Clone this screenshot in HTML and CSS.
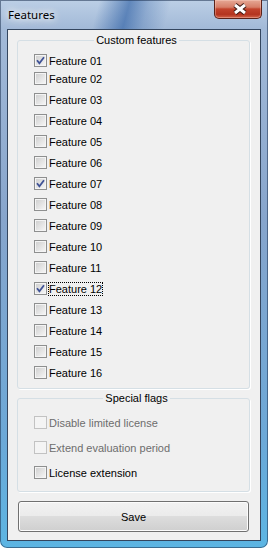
FILE: index.html
```html
<!DOCTYPE html>
<html lang="en">
<head>
<meta charset="UTF-8" />
<meta name="viewport" content="width=device-width, initial-scale=1" />
<title>Features</title>
<link rel="stylesheet" href="styles.css">
</head>
<body>

<div class="window">
  <div class="titlebar">
    <span class="title">Features</span>
    <button class="close" aria-label="Close">
      <svg width="46" height="18" viewBox="0 0 46 18">
        <path d="M20 5 L30 13 M30 5 L20 13" stroke="#3a1712" stroke-width="5" fill="none" />
        <path d="M20 5 L30 13 M30 5 L20 13" stroke="#fff" stroke-width="3" fill="none" />
      </svg>
    </button>
  </div>

  <div class="client">
    <fieldset class="group custom">
      <legend>Custom features</legend>
      <label class="row"><span class="box checked"><svg width="11" height="11" viewBox="0 0 11 11"><path d="M2 5.3 L4.4 8.3 L9 2.3" /></svg></span><span class="text">Feature 01</span></label>
      <label class="row"><span class="box"></span><span class="text">Feature 02</span></label>
      <label class="row"><span class="box"></span><span class="text">Feature 03</span></label>
      <label class="row"><span class="box"></span><span class="text">Feature 04</span></label>
      <label class="row"><span class="box"></span><span class="text">Feature 05</span></label>
      <label class="row"><span class="box"></span><span class="text">Feature 06</span></label>
      <label class="row"><span class="box checked"><svg width="11" height="11" viewBox="0 0 11 11"><path d="M2 5.3 L4.4 8.3 L9 2.3" /></svg></span><span class="text">Feature 07</span></label>
      <label class="row"><span class="box"></span><span class="text">Feature 08</span></label>
      <label class="row"><span class="box"></span><span class="text">Feature 09</span></label>
      <label class="row"><span class="box"></span><span class="text">Feature 10</span></label>
      <label class="row"><span class="box"></span><span class="text">Feature 11</span></label>
      <label class="row"><span class="box checked"><svg width="11" height="11" viewBox="0 0 11 11"><path d="M2 5.3 L4.4 8.3 L9 2.3" /></svg></span><span class="text focused">Feature 12</span></label>
      <label class="row"><span class="box"></span><span class="text">Feature 13</span></label>
      <label class="row"><span class="box"></span><span class="text">Feature 14</span></label>
      <label class="row"><span class="box"></span><span class="text">Feature 15</span></label>
      <label class="row"><span class="box"></span><span class="text">Feature 16</span></label>
    </fieldset>

    <fieldset class="group flags">
      <legend>Special flags</legend>
      <label class="row disabled"><span class="box"></span><span class="text">Disable limited license</span></label>
      <label class="row disabled"><span class="box"></span><span class="text">Extend evaluation period</span></label>
      <label class="row"><span class="box"></span><span class="text">License extension</span></label>
    </fieldset>

    <button class="save">Save</button>
  </div>
</div>

</body>
</html>
```

FILE: styles.css
```css
body {
  margin: 0;
  background: #fff;
  font-family: "Liberation Sans", Arial, sans-serif;
  font-size: 11px;
  color: #000;
}

.window {
  width: 268px;
  height: 548px;
  box-sizing: border-box;
  display: flex;
  flex-direction: column;
  border-radius: 0 0 7px 7px;
  background:
    linear-gradient(105deg, rgba(255,255,255,0) 36%, rgba(36,88,160,0.6) 47%, rgba(36,88,160,0.25) 54%, rgba(255,255,255,0) 62%) top left / 100% 34px no-repeat,
    linear-gradient(to bottom, #bccfe6 0, #a3bad8 28px, #87a5cc 40%, #6ca8d7 80%, #5cb5e3 100%);
  box-shadow: inset 0 0 0 1px rgba(30,50,80,0.55);
}

.titlebar {
  height: 29px;
  display: flex;
  justify-content: space-between;
  align-items: flex-start;
}

.title {
  padding-left: 8px;
  line-height: 29px;
  font-family: "Noto Sans", sans-serif;
  font-size: 11.5px;
  color: #000;
  text-shadow: 0 0 6px #fff, 0 0 10px #fff, 0 0 14px rgba(255,255,255,0.8);
}

.close {
  width: 48px;
  height: 19px;
  margin-right: 6px;
  padding: 0;
  border: 1px solid #5a2219;
  border-top: none;
  border-radius: 0 0 5px 5px;
  background: linear-gradient(to bottom, #e6a895 0, #d67e68 40%, #c2432c 50%, #b4341f 80%, #d2644a 100%);
  box-shadow: inset 0 0 0 1px rgba(255,220,210,0.35);
  display: flex;
  align-items: center;
  justify-content: center;
}

.client {
  flex: 1;
  margin: 0 7px 7px;
  border: 1px solid #34465f;
  background: #f0f0f0;
  padding: 3px 10px 0 9px;
  display: flex;
  flex-direction: column;
}

.group {
  margin: 0;
  border: 1px solid #d5dfe5;
  border-radius: 3px;
  box-shadow: 1px 1px 0 #fff;
  padding: 3px 10px 5px 16px;
}

.group legend {
  margin: 0 auto;
  padding: 0 2px;
  line-height: 14px;
}

.flags {
  margin-top: 2px;
  padding-top: 5px;
  padding-bottom: 6px;
}

.row {
  height: 21px;
  display: flex;
  align-items: center;
}

.custom .row:first-of-type {
  margin-bottom: -3px;
}

.flags .row {
  height: 25px;
}

.box {
  width: 13px;
  height: 13px;
  box-sizing: border-box;
  border: 1px solid #8e8f8f;
  background: linear-gradient(135deg, #cdcdcd, #f8f8f8);
  box-shadow: inset 0 0 0 1px #f4f4f4;
  display: flex;
  align-items: center;
  justify-content: center;
  flex: none;
}

.box svg path {
  fill: none;
  stroke: #3f5296;
  stroke-width: 1.8;
}

.text {
  margin-left: 2px;
  line-height: 12px;
}

.focused {
  outline: 1px dotted #000;
}

.disabled .box {
  border-color: #c2c2c2;
  background: #f4f4f4;
  box-shadow: none;
}

.disabled .text {
  color: #6d6d6d;
}

.save {
  margin: 9px 1px 0;
  height: 31px;
  border: 1px solid #707070;
  border-radius: 3px;
  background: linear-gradient(to bottom, #f2f2f2 0, #ebebeb 50%, #dddddd 50%, #cfcfcf 100%);
  box-shadow: inset 0 0 0 1px #fcfcfc;
  font-family: "Liberation Sans", Arial, sans-serif;
  font-size: 11px;
  color: #000;
}
```
